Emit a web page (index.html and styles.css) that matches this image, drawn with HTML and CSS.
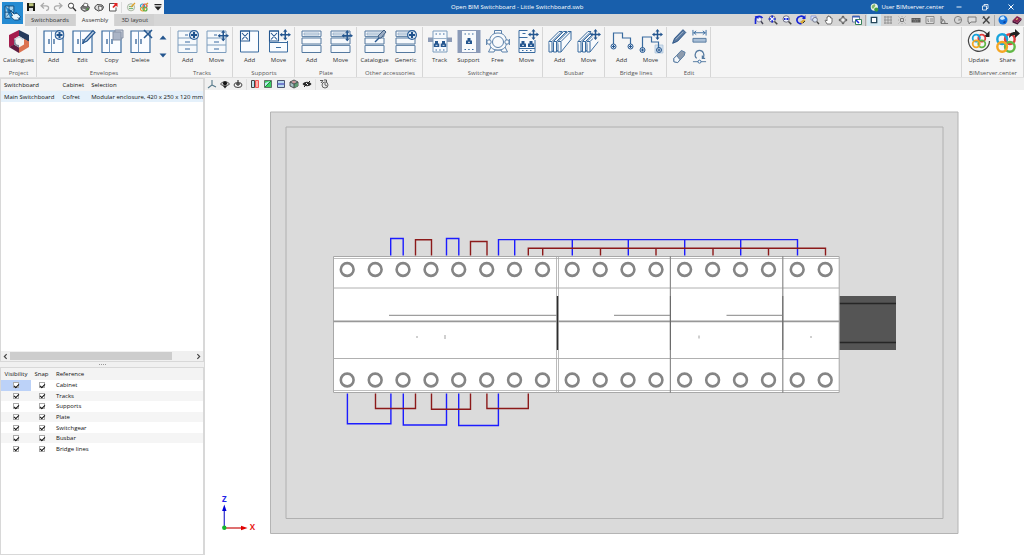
FILE: index.html
```
<!DOCTYPE html>
<html lang="en">
<head>
    <meta charset="UTF-8">
    <meta name="viewport" content="width=device-width, initial-scale=1.0">
    <title>Open BIM Switchboard - Little Switchboard.swb</title>
    <link rel="stylesheet" href="styles.css">
</head>
<body>
    <!-- shared icon parts -->
    <svg class="defs" aria-hidden="true">
        <symbol id="plus" viewBox="0 0 10 10"><circle cx="5" cy="5" r="4.400" fill="#dfe8f2" stroke="#2b5f99" stroke-width="1.200"/><path d="M5 2v6M2 5h6" stroke="#1f528c" stroke-width="2"/></symbol>
        <symbol id="move" viewBox="0 0 12 12"><path d="M6 0l2.200 2.800H6.800v2.400h2.400V3.800L12 6 9.200 8.200V6.800H6.800v2.400h1.400L6 12 3.800 9.200h1.400V6.800H2.800v1.400L0 6l2.800-2.200v1.400h2.400V2.800H3.800z" fill="#24568f"/></symbol>
        <symbol id="cabinet" viewBox="0 0 24 24"><path d="M2 2h19v21.500H2z" fill="#fafcff" stroke="#396b9f" stroke-width="1.200"/><path d="M9.500 2v21.500" stroke="#7398bf"/><path d="M7 10v5M12 10v5" stroke="#24568f" stroke-width="1.200"/></symbol>
        <symbol id="drawers" viewBox="0 0 24 24"><path d="M2 2h19v21.500H2z" fill="#f6f9fc" stroke="#7d9dbd"/><path d="M2 9h19M2 16h19" stroke="#7d9dbd"/><path d="M9 13h5M9 20h5M9 6h3" stroke="#396b9f" stroke-width="1.200"/></symbol>
        <symbol id="plates" viewBox="0 0 24 24"><path d="M2 2h19v5.500H2zM2 9h19v6H2zM2 16.500h19v7H2z" fill="#f6f9fc" stroke="#54799f"/><path d="M4 4h15v2H4z" fill="#dbe5ef" stroke="#8aa5c0" stroke-width=".7"/><path d="M2 8.200h19M2 15.800h19" stroke="#9ab2ca"/></symbol>
        <symbol id="breaker" viewBox="0 0 6 7"><path d="M1.500 0h3v2.500H6V6H0V2.500h1.500z" fill="#24568f"/><path d="M2 4.300h2" stroke="#dfe8f2"/></symbol>
        <symbol id="bars" viewBox="0 0 24 24"><g fill="#f8fafc" stroke="#396b9f" stroke-linejoin="round"><path d="M1 12.500L11 2.500h3v8L4 23H1z"/><path d="M1 12.500h3V23M4 12.500l10-10"/><path d="M5.500 12.500l10-10h3v8L8.500 23h-3z"/><path d="M5.500 12.500h3V23M8.500 12.500l10-10"/><path d="M10 12.500l10-10h3v8L13 23h-3z"/><path d="M10 12.500h3V23M13 12.500l10-10"/></g></symbol>
        <symbol id="rings" viewBox="0 0 20 20"><g fill="none" stroke-width="2.200"><circle cx="6.500" cy="6.500" r="4.400" stroke="#18a4dc"/><circle cx="13.500" cy="6.500" r="4.400" stroke="#e23d3d"/><circle cx="13.500" cy="13.500" r="4.400" stroke="#62b846"/><circle cx="6.500" cy="13.500" r="4.400" stroke="#f5a623"/><path d="M8 2.400a4.400 4.400 0 0 1 2.900 4.100" stroke="#18a4dc"/></g></symbol>
        <symbol id="lens" viewBox="0 0 10 10"><circle cx="4.200" cy="4" r="3.200" fill="#eef3ff" stroke="#667" stroke-width=".9"/><path d="M6.500 6.500L9.300 9.300" stroke="#444" stroke-width="1.500"/></symbol>
    </svg>

    <header class="top">
        <button class="logo" aria-label="Application menu">
            <svg viewBox="0 0 24 24"><path d="M3.500 4h10v7M3.500 4v14h6M3.500 11h6M8 4v6" fill="#a9d4ee" stroke="#0d4474" stroke-width="1"/><path d="M5 16l7-8" stroke="#0d4474" stroke-width=".8"/><path d="M9 9l5 4c2-1 4-1 5 1l2 2-2 4h-5l-4-4 2-1z" fill="#e9f5fc" stroke="#0d4474" stroke-width="1"/><path d="M13 13v-2M16 13v-2M18 17l3 3" stroke="#0d4474"/></svg>
        </button>
        <div class="titlebar">
            <div class="quick">
                <button aria-label="Save"><svg viewBox="0 0 10 10"><path d="M1 1h8v8H1z" fill="#1a1a12"/><path d="M3 1.200h4.500v3H3z" fill="#b9c27b"/><path d="M3 6h4v3H3z" fill="#ddd"/></svg></button>
                <button aria-label="Undo"><svg viewBox="0 0 10 10"><path d="M4 1L1 3.800 4 6.500M1.500 3.800H6c3.500 0 3.500 4.500 0 4.700" fill="none" stroke="#aaa" stroke-width="1.200"/></svg></button>
                <button aria-label="Redo"><svg viewBox="0 0 10 10"><path d="M6 1l3 2.800-3 2.700M8.500 3.800H4c-3.500 0-3.500 4.500 0 4.700" fill="none" stroke="#aaa" stroke-width="1.200"/></svg></button>
                <button aria-label="Find"><svg viewBox="0 0 10 10"><circle cx="4" cy="3.700" r="2.600" fill="#fff" stroke="#444" stroke-width="1"/><path d="M5.800 5.500L9 9" stroke="#333" stroke-width="1.300"/></svg></button>
                <button aria-label="Print"><svg viewBox="0 0 10 10"><path d="M.800 5.500L3 3l5 .500 1.500 2-1 2.500-4 1.500-3.200-2z" fill="#777" stroke="#333" stroke-width=".7"/><path d="M3 4l1.500-3L8 2 7 5z" fill="#fff" stroke="#444" stroke-width=".7"/><path d="M2.500 7l3 1" stroke="#eee"/><circle cx="7.500" cy="7" r="1" fill="#49983d"/></svg></button>
                <button aria-label="Page setup"><svg viewBox="0 0 10 10"><path d="M.800 5L3 2.500l5 .5 1.500 2-1 2.500-4 1.500L1 7z" fill="#ddd" stroke="#444" stroke-width="1"/><path d="M4.500 4l3.500.500V8L5 8.500z" fill="#fff" stroke="#444" stroke-width=".8"/></svg></button>
                <button aria-label="Export"><svg viewBox="0 0 10 10"><path d="M6 1.500H1.500v7.500H8V5.500" fill="#fff" stroke="#555"/><path d="M5.500 1H9.500v4L8 3.700 5.500 6 4.300 5l2.400-2.400z" fill="#e02424"/></svg></button>
                <i class="sep"></i>
                <button aria-label="Edit resources"><svg viewBox="0 0 10 10"><circle cx="5" cy="5.300" r="3.600" fill="#e9eee3" stroke="#9aa996" stroke-width=".8"/><path d="M3 4.500h4M3 6.500h4" stroke="#77b57b"/><path d="M5 5l4-4" stroke="#e1a12c" stroke-width="1.300"/></svg></button>
                <button aria-label="Update resources"><svg viewBox="0 0 10 10"><circle cx="3.500" cy="4" r="2" fill="none" stroke="#2aa2cf" stroke-width="1.200"/><circle cx="6" cy="4" r="2" fill="none" stroke="#d44" stroke-width="1.200"/><circle cx="3.500" cy="7" r="2" fill="none" stroke="#e4a02a" stroke-width="1.200"/><circle cx="6" cy="7" r="2" fill="none" stroke="#5bae43" stroke-width="1.200"/><path d="M6.500 3L9 1" stroke="#d99a2d" stroke-width="1.300"/></svg></button>
                <button aria-label="Customise toolbar"><svg viewBox="0 0 10 10"><path d="M1.500 2h7v1.200h-7zM1.500 4.500h7L5 8.500z" fill="#222"/></svg></button>
            </div>
            <h1 class="title">Open BIM Switchboard - Little Switchboard.swb</h1>
            <a class="user" href="#"><svg viewBox="0 0 10 10"><circle cx="4.800" cy="4.500" r="4" fill="#e8f3e3"/><path d="M2 3l3-2 1 2-2 3-2 0z" fill="#82b66a"/><circle cx="7" cy="7.300" r="2.300" fill="#3f9d40"/></svg>User BIMserver.center</a>
            <div class="window">
                <button aria-label="Minimise"><svg viewBox="0 0 10 10"><path d="M2.500 5h5" stroke="#fff" stroke-width=".9"/></svg></button>
                <button aria-label="Restore"><svg viewBox="0 0 10 10"><path d="M2.500 4h4v4h-4zM4 4V2.500h4v4H6.500" fill="none" stroke="#fff" stroke-width=".8"/></svg></button>
                <button aria-label="Close"><svg viewBox="0 0 10 10"><path d="M2.500 2.500l5 5M7.500 2.500l-5 5" stroke="#fff" stroke-width="1"/></svg></button>
            </div>
        </div>
        <div class="tabbar">
            <nav class="tabs">
                <a href="#">Switchboards</a>
                <a href="#" class="active">Assembly</a>
                <a href="#">3D layout</a>
            </nav>
            <div class="tools">
                <button aria-label="Previous view"><svg viewBox="0 0 10 10"><path d="M6 5l3 4" stroke="#445" stroke-width="1.400"/><circle cx="5" cy="4.500" r="2.500" fill="#eef" stroke="#778" stroke-width=".7"/><path d="M1.500 9V4c0-3 5-3.500 7-1" fill="none" stroke="#1624d8" stroke-width="1.600"/><path d="M.500 1h4v3z" fill="#1624d8"/></svg></button>
                <button aria-label="Zoom all"><svg viewBox="0 0 10 10"><use href="#lens"/><path d="M4.200 .5v7M.700 4h7" stroke="#1624d8" stroke-width="1.700" stroke-dasharray="2.200 2.600"/></svg></button>
                <button aria-label="Zoom in"><svg viewBox="0 0 10 10"><use href="#lens"/><path d="M2 4h1.500M4.500 4h2" stroke="#1624d8" stroke-width="1.800"/></svg></button>
                <button aria-label="Redraw"><svg viewBox="0 0 10 10"><path d="M1 6V4c1-3 6-4 7-1M1 6c1 3 4 3 5 2" fill="none" stroke="#1624d8" stroke-width="1.700"/><path d="M9.500 0v4H6z" fill="#1624d8"/><path d="M4 7l4-3 1.500 2L6 9z" fill="#d8a937"/><path d="M7 8l2-2" stroke="#333"/></svg></button>
                <button aria-label="Zoom window"><svg viewBox="0 0 10 10"><path d="M1 1h5v4H1z" fill="#dce5ff" stroke="#7988c8" stroke-width=".7"/><circle cx="5" cy="4.800" r="2.400" fill="#dce8f6" stroke="#667" stroke-width=".8"/><path d="M6.800 6.600L9 9" stroke="#444" stroke-width="1.400"/></svg></button>
                <button aria-label="Pan"><svg viewBox="0 0 10 10"><path d="M3 9L1 5.500l1-.5 1 1V2h1V1h1.200v.7h1.300V3H8v4L7 9z" fill="#fff" stroke="#555" stroke-width=".8"/></svg></button>
                <button aria-label="Orbit"><svg viewBox="0 0 10 10"><path d="M5 .5l2 2H3zM5 9.500l2-2H3zM.500 5l2-2v4zM9.500 5l-2-2v4z" fill="#555"/><circle cx="5" cy="5" r="2.300" fill="#eee" stroke="#555" stroke-width=".8"/></svg></button>
                <button aria-label="Window layout"><svg viewBox="0 0 10 10"><path d="M.500 1h7v6h-7z" fill="#fff" stroke="#6677a4"/><path d="M.500 1h7v1.500h-7z" fill="#3c62b8"/><path d="M3.500 4.500h6v5h-6z" fill="#fff" stroke="#38835b"/><path d="M4 5l3 3" stroke="#1624d8" stroke-width="1.500"/></svg></button>
                <i class="sep"></i>
                <button class="on" aria-label="Ortho"><svg viewBox="0 0 10 10"><path d="M2.300 2.300h5.400v5.400H2.300z" fill="#fff" stroke="#244659" stroke-width="1.300"/></svg></button>
                <button aria-label="Grid"><svg viewBox="0 0 10 10"><path d="M2 1v8M5 1v8M8 1v8M1 2h8M1 5h8M1 8h8" stroke="#888" stroke-width=".8"/></svg></button>
                <button aria-label="Snap"><svg viewBox="0 0 10 10"><path d="M3.500 3.500h3v3h-3z" fill="none" stroke="#777"/><path d="M1.500 1.500l1 1M8.500 1.500l-1 1M1.500 8.500l1-1M8.500 8.500l-1-1M5 1v1M5 8v1M1 5h1M8 5h1" stroke="#999" stroke-width=".8"/></svg></button>
                <button aria-label="Keyboard input"><svg viewBox="0 0 10 10"><path d="M.500 3h9v4.500h-9z" fill="#555"/><path d="M1.500 4.300h7M2.500 6h5" stroke="#bbb" stroke-width=".7" stroke-dasharray="1 .6"/></svg></button>
                <button aria-label="Drawing templates"><svg viewBox="0 0 10 10"><path d="M1 1.500h8v7H1z" fill="#ddd" stroke="#777" stroke-width=".8"/><path d="M3 3.500v3h1M5 4h3M5 6h3" fill="none" stroke="#777" stroke-width=".8"/></svg></button>
                <button aria-label="Angle"><svg viewBox="0 0 10 10"><path d="M2 1v7.500h7M2 4c3 0 4 2 4 4.500M4 5l-2 3" fill="none" stroke="#666" stroke-width=".9"/></svg></button>
                <button aria-label="Circle"><svg viewBox="0 0 10 10"><circle cx="5" cy="5" r="3.600" fill="none" stroke="#777" stroke-width=".9"/><path d="M5 5h2.500M6 3.500L7.500 5" stroke="#777" stroke-width=".8"/></svg></button>
                <button aria-label="Comment"><svg viewBox="0 0 10 10"><path d="M1 2h8v5H4L2 9V7H1z" fill="#ddd" stroke="#666" stroke-width=".8"/></svg></button>
                <button aria-label="Settings"><svg viewBox="0 0 10 10"><path d="M2 1.500l6.500 7M8.500 1.500L2 8.500" stroke="#444" stroke-width="1.400"/><path d="M1.500 3.500l2-2" stroke="#444"/></svg></button>
                <i class="sep"></i>
                <button aria-label="Web"><svg viewBox="0 0 10 10"><circle cx="5" cy="5" r="4.500" fill="#1674dd"/><path d="M2 4c0-2 2-3 4-2.500L7 4 4 5z" fill="#cce9ff"/><path d="M5 7l2-1 1 1-2 1.500z" fill="#0b3f9a"/></svg></button>
                <button aria-label="Help"><svg viewBox="0 0 10 10"><path d="M.500 5.500L5 1l4.500 2.500L5.500 8z" fill="#8b2450"/><path d="M.500 5.500v2L5.500 9.500l4-4.500V3.500L5.500 8z" fill="#481238"/><path d="M4 4.500l2-1" stroke="#f0c66a" stroke-width="1.200"/></svg></button>
            </div>
        </div>
    </header>

    <div class="ribbon">
        <section class="group project">
            <div class="items">
                <button class="cmd wide"><svg viewBox="0 0 24 24"><path d="M2 6L12 1v6l-5 3v6l-5 2z" fill="#a51d4d"/><path d="M2 18l5-2.500 5 3V24z" fill="#5f1c40"/><path d="M12 1l10 5v7l-5-3-5-3z" fill="#263b5c"/><path d="M22 12.500V18l-10 6v-5.500l5-3V10z" fill="#dc7351"/><path d="M7 10l5-3 5 3-5 3z" fill="#c9d1da"/><path d="M7 10l5 3v5.500l-5-3z" fill="#7d8795"/><circle cx="12" cy="12.500" r="3.600" fill="#f3f3f3"/></svg>Catalogues</button>
            </div>
            <h2>Project</h2>
        </section>
        <section class="group">
            <div class="items">
                <button class="cmd"><svg viewBox="0 0 24 24"><use href="#cabinet"/><use href="#plus" x="12.500" y="1" width="10" height="10"/></svg>Add</button>
                <button class="cmd"><svg viewBox="0 0 24 24"><use href="#cabinet"/><path d="M12 14l2-4 8-8.500 2 2-8 8.500z" fill="#b8cbe0" stroke="#24568f" stroke-width="1.200"/></svg>Edit</button>
                <button class="cmd"><svg viewBox="0 0 24 24"><use href="#cabinet"/><path d="M15 1h8v8h-8z" fill="#c3c9d6" stroke="#8792a6"/><path d="M13 3h8v8h-8z" fill="#aab4c6" stroke="#8792a6"/></svg>Copy</button>
                <button class="cmd"><svg viewBox="0 0 24 24"><use href="#cabinet"/><path d="M15 1l8 8M23 1l-8 8" stroke="#24568f" stroke-width="1.600"/></svg>Delete</button>
                <div class="spin">
                    <button aria-label="Up"><svg viewBox="0 0 8 5"><path d="M.500 4.500h7L4 .5z" fill="#24568f"/></svg></button>
                    <button aria-label="Down"><svg viewBox="0 0 8 5"><path d="M.500.500h7L4 4.500z" fill="#24568f"/></svg></button>
                </div>
            </div>
            <h2>Envelopes</h2>
        </section>
        <section class="group">
            <div class="items">
                <button class="cmd"><svg viewBox="0 0 24 24"><use href="#drawers"/><use href="#plus" x="13" y="1" width="10" height="10"/></svg>Add</button>
                <button class="cmd"><svg viewBox="0 0 24 24"><use href="#drawers"/><use href="#move" x="12.500" y="1" width="11.500" height="11.500"/></svg>Move</button>
            </div>
            <h2>Tracks</h2>
        </section>
        <section class="group">
            <div class="items">
                <button class="cmd"><svg viewBox="0 0 24 24"><path d="M2.500 2h18v21h-18z" fill="#fafcff" stroke="#396b9f"/><path d="M2.500 2h9v10h-9zM4 4l6 6.500M10 4l-6 6.500" fill="none" stroke="#24568f" stroke-width="1.100"/></svg>Add</button>
                <button class="cmd"><svg viewBox="0 0 24 24"><path d="M2.500 2h18v21h-18zM2.500 13.500h18M9 18.500h5" fill="#fafcff" stroke="#396b9f"/><path d="M12 0h12v12H12z" fill="#f5f5f5"/><path d="M2.500 2h9v10h-9zM4 4l6 6.500M10 4l-6 6.500" fill="none" stroke="#24568f" stroke-width="1.100"/><use href="#move" x="12.500" width="11.500" height="11.500"/></svg>Move</button>
            </div>
            <h2>Supports</h2>
        </section>
        <section class="group">
            <div class="items">
                <button class="cmd"><svg viewBox="0 0 24 24"><use href="#plates"/></svg>Add</button>
                <button class="cmd"><svg viewBox="0 0 24 24"><use href="#plates"/><use href="#move" x="12.500" y="1" width="11.500" height="11.500"/></svg>Move</button>
            </div>
            <h2>Plate</h2>
        </section>
        <section class="group accessories">
            <div class="items">
                <button class="cmd"><svg viewBox="0 0 24 24"><use href="#plates"/><path d="M12 13l5-5" stroke="#24568f" stroke-width="1.500"/><path d="M16 9l-1-2 6-6 2 2-5 6z" fill="#9aacc4" stroke="#405e82"/></svg>Catalogue</button>
                <button class="cmd"><svg viewBox="0 0 24 24"><use href="#plates"/><use href="#plus" x="13" y="1" width="10" height="10"/></svg>Generic</button>
            </div>
            <h2>Other accessories</h2>
        </section>
        <section class="group">
            <div class="items">
                <button class="cmd"><svg viewBox="0 0 24 24"><path d="M0 8.500h24v4.500H0z" fill="#8c9bb6"/><path d="M5 2h14v21H5z" fill="#f6f9fc" stroke="#7d9dbd"/><path d="M7.500 5h1.500M11.200 5h1.500M15 5h1.500M7.500 21h1.500M11.200 21h1.500M15 21h1.500" stroke="#396b9f" stroke-width="1.200"/><path d="M5 9.500h14" stroke="#9ab2ca"/><use href="#breaker" x="5.500" y="12" width="6" height="7"/><use href="#breaker" x="12.500" y="12" width="6" height="7"/></svg>Track</button>
                <button class="cmd"><svg viewBox="0 0 24 24"><path d="M.500 1h23v23H.5z" fill="#8b9bb8"/><path d="M5 2h14v21H5z" fill="#f8fafc"/><path d="M7.500 5h1.500M11.200 5h1.500M15 5h1.500M7.500 20.500h1.500M11.200 20.500h1.500M15 20.500h1.500" stroke="#396b9f" stroke-width="1.200"/><use href="#breaker" x="9" y="9" width="6" height="7"/></svg>Support</button>
                <button class="cmd"><svg viewBox="0 0 24 24"><g fill="#f8fafc" stroke="#5c82ab"><path d="M5 18l-2.500 5H8l1-2h6l1 2h5.500L19 18"/><path d="M8.500 5V1.500h7V5"/><path d="M12 4c6 0 8.500 4 8.500 9s-2.500 8-8.500 8-8.500-3-8.500-8S6 4 12 4z"/><circle cx="3" cy="13" r="2.200"/><circle cx="21" cy="13" r="2.200"/><circle cx="12" cy="13" r="5.500"/></g><path d="M.600 10v6M23.400 10v6" stroke="#5c82ab"/></svg>Free</button>
                <button class="cmd"><svg viewBox="0 0 24 24"><path d="M4 1.500h16v22H4zM4 8.500h16M4 19.500h16" fill="#f8fafc" stroke="#396b9f"/><path d="M7.500 4.500h3M7 21.500h1.500M11 21.500h1.500M15 21.500h1.500" stroke="#396b9f" stroke-width="1.200"/><use href="#breaker" x="5" y="12" width="6" height="7"/><use href="#breaker" x="13" y="12" width="6" height="7"/><path d="M12.500 0H24v11H12.500z" fill="#f5f5f5"/><use href="#move" x="13" width="11" height="11"/></svg>Move</button>
            </div>
            <h2>Switchgear</h2>
        </section>
        <section class="group">
            <div class="items">
                <button class="cmd"><svg viewBox="0 0 24 24"><use href="#bars"/></svg>Add</button>
                <button class="cmd"><svg viewBox="0 0 24 24"><use href="#bars"/><path d="M15 0h9v14l-8-4-2-6z" fill="#f5f5f5"/><use href="#move" x="13" width="11" height="11"/></svg>Move</button>
            </div>
            <h2>Busbar</h2>
        </section>
        <section class="group">
            <div class="items">
                <button class="cmd"><svg viewBox="0 0 24 24"><path d="M3.500 15V4h9v5h8v6" fill="none" stroke="#396b9f" stroke-width="1.200"/><g fill="#dfe8f2" stroke="#24568f"><circle cx="3.500" cy="17.500" r="2.500"/><circle cx="20.500" cy="17.500" r="2.500"/></g><path d="M2 17.500h3M19 17.500h3M3.500 16v3M20.500 16v3" stroke="#24568f"/></svg>Add</button>
                <button class="cmd"><svg viewBox="0 0 24 24"><path d="M16 16h8v8h-8z" fill="#d3e1ef" stroke="#a7c0d9" stroke-width=".7"/><path d="M3.500 19V8h9v5h7v6" fill="none" stroke="#396b9f" stroke-width="1.200"/><g fill="#dfe8f2" stroke="#24568f"><circle cx="3.500" cy="21" r="2.500"/><circle cx="20" cy="21" r="2.500"/></g><path d="M2 21h3M18.500 21h3M3.500 19.500v3M20 19.500v3" stroke="#24568f"/><use href="#move" x="13" width="11" height="11"/></svg>Move</button>
            </div>
            <h2>Bridge lines</h2>
        </section>
        <section class="group edit">
            <div class="items">
                <button aria-label="Edit"><svg viewBox="0 0 16 16"><path d="M.700 15.300l2-5.300 9-9.300 3 3L6 13z" fill="#5c7aa0" stroke="#234f83"/><path d="M4 11l8-8" stroke="#9db1c8"/></svg></button>
                <button aria-label="Measure"><svg viewBox="0 0 16 16"><path d="M1 1v6M15 1v6M1.500 4h13M4.500 2L2 4l2.500 2M11.500 2L14 4l-2.500 2" fill="none" stroke="#396b9f" stroke-width="1"/><path d="M1 10h14v4H1z" fill="#a9bfd7" stroke="#54799f"/></svg></button>
                <button aria-label="Erase"><svg viewBox="0 0 16 16"><path d="M2 10l8-8.500 4 2L13 7l-7 7.500-4-1z" fill="#8d9bad" stroke="#54799f"/><path d="M2 10l3-3 3.500 4.500L6 14.500l-4-1z" fill="#f5f8fb" stroke="#54799f"/></svg></button>
                <button aria-label="Rotate"><svg viewBox="0 0 16 16"><path d="M5 10C1.500 7 4 1.500 8 1.500s6.500 5.500 3 8.500M11 7v3h3" fill="none" stroke="#54799f" stroke-width="1.200"/><path d="M1 13.500h14" stroke="#54799f"/><circle cx="8" cy="13.500" r="1.600" fill="#fff" stroke="#396b9f"/></svg></button>
            </div>
            <h2>Edit</h2>
        </section>
        <section class="group server">
            <div class="items">
                <button class="cmd"><svg viewBox="0 0 24 24"><path d="M20 5A10.500 10.500 0 1 0 22.500 12" fill="none" stroke="#444" stroke-width="1.200"/><path d="M22.500 2v6h-6z" fill="#222"/><use href="#rings" x="4" y="4" width="16" height="16"/></svg>Update</button>
                <button class="cmd"><svg viewBox="0 0 24 24"><use href="#rings" x="-1" y="3" width="22" height="22"/><path d="M13 9c0-4 2-6 6-6V0l5 4.500L19 9V6c-3 0-4 1-6 3z" fill="#222"/></svg>Share</button>
            </div>
            <h2>BIMserver.center</h2>
        </section>
    </div>

    <main class="work">
        <aside class="side">
            <div class="boards">
                <table>
                    <thead><tr><th>Switchboard</th><th>Cabinet</th><th>Selection</th></tr></thead>
                    <tbody><tr><td>Main Switchboard</td><td>Cofret</td><td>Modular enclosure, 420 x 250 x 120 mm</td></tr></tbody>
                </table>
                <div class="hscroll">
                    <button aria-label="Scroll left"><svg viewBox="0 0 6 6"><path d="M4 1L2 3l2 2" fill="none" stroke="#444"/></svg></button>
                    <div class="track"><div class="thumb"></div></div>
                    <button aria-label="Scroll right"><svg viewBox="0 0 6 6"><path d="M2 1l2 2-2 2" fill="none" stroke="#444"/></svg></button>
                </div>
            </div>
            <div class="splitter"><i></i><i></i><i></i><i></i></div>
            <div class="layers">
                <table>
                    <thead><tr><th>Visibility</th><th>Snap</th><th>Reference</th></tr></thead>
                    <tbody>
                        <tr><td class="current"><input type="checkbox" aria-label="Cabinet visible" checked></td><td><input type="checkbox" aria-label="Cabinet snap" checked></td><td>Cabinet</td></tr>
                        <tr><td><input type="checkbox" aria-label="Tracks visible" checked></td><td><input type="checkbox" aria-label="Tracks snap" checked></td><td>Tracks</td></tr>
                        <tr><td><input type="checkbox" aria-label="Supports visible" checked></td><td><input type="checkbox" aria-label="Supports snap" checked></td><td>Supports</td></tr>
                        <tr><td><input type="checkbox" aria-label="Plate visible" checked></td><td><input type="checkbox" aria-label="Plate snap" checked></td><td>Plate</td></tr>
                        <tr><td><input type="checkbox" aria-label="Switchgear visible" checked></td><td><input type="checkbox" aria-label="Switchgear snap" checked></td><td>Switchgear</td></tr>
                        <tr><td><input type="checkbox" aria-label="Busbar visible" checked></td><td><input type="checkbox" aria-label="Busbar snap" checked></td><td>Busbar</td></tr>
                        <tr><td><input type="checkbox" aria-label="Bridge lines visible" checked></td><td><input type="checkbox" aria-label="Bridge lines snap" checked></td><td>Bridge lines</td></tr>
                    </tbody>
                </table>
            </div>
        </aside>

        <section class="view">
            <div class="viewbar">
                <button aria-label="Axes"><svg viewBox="0 0 10 10"><path d="M5 1v5L1 9M5 6l4 2" fill="none" stroke="#56798a" stroke-width="1.100"/></svg></button>
                <button aria-label="Orbit view"><svg viewBox="0 0 10 10"><path d="M.500 5C3 2 7 2 9.500 5 7 7.500 3 7.500.500 5z" fill="#ccc" stroke="#333" stroke-width=".9"/><path d="M5 9.500L3 7h4z" fill="#222"/><circle cx="5" cy="4.200" r="2" fill="#111"/></svg></button>
                <button aria-label="Turn view"><svg viewBox="0 0 10 10"><ellipse cx="5" cy="6" rx="4" ry="2.500" fill="none" stroke="#444"/><path d="M5 1v6M3 5h4" stroke="#444" stroke-width="1.300"/></svg></button>
                <i class="sep"></i>
                <button aria-label="Section X"><svg viewBox="0 0 10 10"><path d="M1.500 1.500h3v7h-3z" fill="#bde3ef" stroke="#444"/><path d="M5.500 1.500h3v7h-3z" fill="#ffb0aa" stroke="#e55"/></svg></button>
                <button aria-label="Section Y"><svg viewBox="0 0 10 10"><path d="M1.500 1.500h7v7h-7z" fill="#39cf62" stroke="#5f6f66"/><path d="M2 8V4l5-2z" fill="#bfe9f2"/><path d="M2 8l6-6" stroke="#168c38"/></svg></button>
                <button aria-label="Section Z"><svg viewBox="0 0 10 10"><path d="M1.500 1.500h7v7h-7z" fill="#bad9ed" stroke="#4c5570"/><path d="M1.500 5h7" stroke="#5a62c4" stroke-width="1.500"/></svg></button>
                <button aria-label="Section box"><svg viewBox="0 0 10 10"><path d="M5 1l4 2v4L5 9 1 7V3z" fill="#a5bfc4" stroke="#444" stroke-width=".9"/><path d="M5 5l4-2v4L5 9z" fill="#5f9c73"/><path d="M2.500 3L5 2l2 1-2 1z" fill="#d88"/><path d="M1 3l4 2v4M5 5l4-2" fill="none" stroke="#444" stroke-width=".9"/></svg></button>
                <button aria-label="Hide elements"><svg viewBox="0 0 10 10"><path d="M.500 5C3 2 7 2 9.500 5 7 8 3 8 .500 5z" fill="#222"/><circle cx="5" cy="5" r="1.200" fill="#fff"/><path d="M2 8l6-6" stroke="#222"/></svg></button>
                <i class="sep"></i>
                <button aria-label="Rendering"><svg viewBox="0 0 10 10"><circle cx="6" cy="6" r="3" fill="#e8e8e8" stroke="#666"/><path d="M1 1.500h3L2 4M5 1h2.500v2" fill="none" stroke="#555"/><path d="M6 4v2l2 1" fill="none" stroke="#666"/></svg></button>
            </div>
            <svg class="scene" viewBox="205 90 819 465" preserveAspectRatio="xMinYMin meet" role="img" aria-label="Front view of the cabinet">
                <!-- cabinet -->
                <path d="M270.500 112h687.500v421.500H270.500z" fill="#dadada" stroke="#b4b4b4"/>
                <path d="M286 127h657v391.500H286z" fill="#dbdbdb" stroke="#b0b0b0"/>
                <!-- rail -->
                <path d="M839 296h57v54h-57z" fill="#555"/>
                <path d="M839 303.500h57M839 342.500h57" stroke="#262626" stroke-width="1.300"/>
                <!-- modules -->
                <path d="M333.500 256.500h505.700v136H333.500z" fill="#fff" stroke="#a8a8a8"/>
                <path d="M333.500 258.500h505.700M333.500 390.500h505.700" stroke="#b0b0b0" stroke-width=".8"/>
                <path d="M333.500 288h505.700M333.500 358.500h505.700" stroke="#b0b0b0"/>
                <path d="M333.500 321.300h505.700" stroke="#989898" stroke-width="1.800"/>
                <path d="M556.500 256v137M558.500 256v137" stroke="#aaa" stroke-width=".8"/>
                <path d="M670.400 256v137M782.800 256v137" stroke="#8c8c8c" stroke-width="1.200"/>
                <path d="M557.500 296v54" stroke="#2d2d2d" stroke-width="1.400"/>
                <path d="M670.400 296v54M782.800 296v54" stroke="#666"/>
                <path d="M389 315.300h168M614 315.300h56M726.500 315.300h56" stroke="#868686"/>
                <path d="M417 336v2M445 335v4M699 335.500v3M811 336v2" stroke="#888" stroke-width=".8"/>
                <!-- terminals -->
                <g fill="#fff" stroke="#858585" stroke-width="2.600">
                    <circle cx="347.200" cy="269.500" r="6.400"/><circle cx="375.200" cy="269.500" r="6.400"/><circle cx="403" cy="269.500" r="6.400"/><circle cx="431" cy="269.500" r="6.400"/><circle cx="458.700" cy="269.500" r="6.400"/><circle cx="486.700" cy="269.500" r="6.400"/><circle cx="514.500" cy="269.500" r="6.400"/><circle cx="542.500" cy="269.500" r="6.400"/>
                    <circle cx="572.200" cy="269.500" r="6.400"/><circle cx="600.200" cy="269.500" r="6.400"/><circle cx="628" cy="269.500" r="6.400"/><circle cx="656" cy="269.500" r="6.400"/><circle cx="684.600" cy="269.500" r="6.400"/><circle cx="712.600" cy="269.500" r="6.400"/><circle cx="740.500" cy="269.500" r="6.400"/><circle cx="768.500" cy="269.500" r="6.400"/><circle cx="797.200" cy="269.500" r="6.400"/><circle cx="825.200" cy="269.500" r="6.400"/>
                    <circle cx="347.200" cy="380" r="6.400"/><circle cx="375.200" cy="380" r="6.400"/><circle cx="403" cy="380" r="6.400"/><circle cx="431" cy="380" r="6.400"/><circle cx="458.700" cy="380" r="6.400"/><circle cx="486.700" cy="380" r="6.400"/><circle cx="514.500" cy="380" r="6.400"/><circle cx="542.500" cy="380" r="6.400"/>
                    <circle cx="572.200" cy="380" r="6.400"/><circle cx="600.200" cy="380" r="6.400"/><circle cx="628" cy="380" r="6.400"/><circle cx="656" cy="380" r="6.400"/><circle cx="684.600" cy="380" r="6.400"/><circle cx="712.600" cy="380" r="6.400"/><circle cx="740.500" cy="380" r="6.400"/><circle cx="768.500" cy="380" r="6.400"/><circle cx="797.200" cy="380" r="6.400"/><circle cx="825.200" cy="380" r="6.400"/>
                </g>
                <!-- bridge lines -->
                <g fill="none" stroke="#1c1cff" stroke-width="1.400">
                    <path d="M390.700 255.500v-17h12.500v17M446.500 255.500v-17h12.300v17M498.500 255.500v-15.900h299v15.900M514.700 239.600v15.900M572.300 239.600v15.900M628.300 239.600v15.900M684.700 239.600v15.900M740.700 239.600v15.900"/>
                    <path d="M347.400 393.500V423.800H390.900V393.500M403.300 393.500V425H446.500V393.500M458.700 393.500V425.500H498.400V393.500"/>
                </g>
                <g fill="none" stroke="#8c1a1a" stroke-width="1.400">
                    <path d="M415.500 255.500v-15.800h16v15.800M470.500 255.500v-14h16.500v14M528.300 255.500v-7.200h297.200v7.200M542.700 248.300v7.200M600.500 248.300v7.200M656 248.300v7.200M713 248.300v7.200M768.500 248.300v7.200"/>
                    <path d="M375.500 393.500v15h40v-15M431.500 393.500v15.700h39v-15.700M486.900 393.500v15h41.400v-15"/>
                </g>
                <!-- axes -->
                <path d="M224.300 527V509" stroke="#3a3ad0" stroke-width="1.300"/>
                <path d="M224.300 504.500l2.200 6.500h-4.400z" fill="#0000d8"/>
                <path d="M225 528h17" stroke="#c22" stroke-width="1.300"/>
                <path d="M247.500 528l-6.500-2.200v4.400z" fill="#e00000"/>
                <circle cx="224.300" cy="527.700" r="2.200" fill="#12b52c"/>
                <text class="axis z" x="224.300" y="501.500">Z</text>
                <text class="axis x" x="252.500" y="530">X</text>
            </svg>
        </section>
    </main>
</body>
</html>
```
FILE: styles.css
```
* { box-sizing: border-box; }
html, body { height: 100%; }
body {
    margin: 0;
    display: flex;
    flex-direction: column;
    background: #f0f0f0;
    color: #111;
    font: 6px/8px "Open Sans", "Noto Sans", sans-serif;
    overflow: hidden;
}
button {
    margin: 0;
    padding: 0;
    border: 0;
    background: none;
    color: inherit;
    font: inherit;
}
a { color: inherit; text-decoration: none; }
h1, h2 { margin: 0; font: inherit; }
svg { display: block; }
.defs { position: absolute; width: 0; height: 0; }

/* title bar and tabs */
.top {
    display: grid;
    grid-template: 14px 12px / 24px 1fr;
    background: #d6d6d6;
}
.logo {
    grid-row: 1 / 3;
    padding: 2px 1px 2px 2px;
    background: #f5f5f5;
}
.logo svg { width: 21px; height: 22px; background: #258bd2; }
.titlebar {
    display: flex;
    align-items: stretch;
    background: #185fac;
    color: #fff;
}
.quick {
    display: flex;
    align-items: center;
    justify-content: space-between;
    width: 140px;
    padding: 0 1px 0 2px;
    background: #f5f5f5;
}
.quick svg, .tools svg, .viewbar svg { width: 10px; height: 10px; }
.title { flex: 1; text-align: center; line-height: 14px; }
.user { display: flex; align-items: center; gap: 2px; margin-right: 5px; }
.user svg { width: 9px; height: 9px; }
.window { display: flex; align-items: center; gap: 16px; padding: 0 8px 0 5px; }
.window svg { width: 10px; height: 10px; }
.tabbar { display: flex; justify-content: space-between; }
.tabs { display: flex; gap: 1px; border-left: 1px solid #f5f5f5; color: #333; }
.tabs a { padding: 0 6px; line-height: 12px; background: #d1d1d1; }
.tabs .active { background: #f5f5f5; }
.tools { display: flex; align-items: center; }
.tools button {
    display: grid;
    place-items: center;
    width: 14px;
    height: 12px;
}
.tools .on { background: #d5e9f2; }
.sep { width: 1px; height: 11px; background: #dcdcdc; }
.tools .sep { margin: 0 1px; background: #aaa; }

/* ribbon */
.ribbon {
    display: flex;
    height: 52px;
    padding-top: 1px;
    background: #f5f5f5;
    border-bottom: 1px solid #e0e0e0;
}
.group {
    display: flex;
    flex-direction: column;
    justify-content: space-between;
    padding: 2px 1px 0 2px;
    border-right: 1px solid #d6d6d6;
}
.group h2 { color: #555; text-align: center; white-space: nowrap; }
.items { display: flex; }
.cmd {
    display: flex;
    flex-direction: column;
    align-items: center;
    gap: 3px;
    width: 29px;
    color: #333;
}
.cmd svg { width: 24px; height: 24px; overflow: visible; }
.cmd.wide { width: 33px; }
.accessories .cmd { width: 31px; }
.spin {
    display: flex;
    flex-direction: column;
    justify-content: center;
    gap: 13px;
    width: 14px;
    padding-left: 4px;
}
.spin svg { width: 8px; height: 5px; }
.edit .items { display: grid; grid-template-columns: 20px 20px; row-gap: 5px; }
.edit button { display: grid; place-items: center; }
.edit svg { width: 15px; height: 15px; }
.server { margin-left: auto; border-left: 1px solid #d6d6d6; }

/* work area */
.work { flex: 1; display: flex; min-height: 0; }
.side {
    display: flex;
    flex-direction: column;
    width: 205px;
    border-right: 1px solid #d8d8d8;
}
table { width: 100%; border-collapse: collapse; white-space: nowrap; }
th, td { padding: 0; font-weight: 400; text-align: left; }
th { background: #f3f3f3; }
.boards {
    flex: 1;
    display: flex;
    flex-direction: column;
    justify-content: space-between;
    background: #fff;
    border: 1px solid #d8d8d8;
    overflow: hidden;
}
.boards th { height: 12px; }
.boards td { height: 11px; background: #e5f1fb; }
.boards th, .boards td { padding-left: 3px; }
.boards th:first-child { width: 59px; }
.boards th:nth-child(2) { width: 29px; }
.hscroll { display: flex; align-items: center; height: 10px; background: #f0f0f0; }
.hscroll button { width: 9px; display: grid; place-items: center; }
.hscroll svg { width: 7px; height: 7px; }
.track { flex: 1; }
.thumb { width: 88%; height: 8px; background: #cdcdcd; }
.splitter { display: flex; justify-content: center; align-items: center; gap: 1px; height: 5px; }
.splitter i { width: 1px; height: 1px; background: #999; }
.layers { height: 188px; background: #fff; border: 1px solid #d8d8d8; }
.layers table { height: 86px; }
.layers th { height: 12px; text-align: center; }
.layers th:last-child, .layers td:last-child { padding-left: 4px; text-align: left; }
.layers th:first-child { width: 30px; }
.layers th:nth-child(2) { width: 21px; }
.layers td { text-align: center; }
.layers tbody tr:nth-child(even) { background: #f5f5f5; }
.layers .current { background: #bcd2f8; }
.layers input {
    appearance: none;
    display: grid;
    place-items: center;
    width: 6px;
    height: 6px;
    margin: 0 auto;
    border: 1px solid #aaa;
    background: #fff;
}
.layers input:checked::after {
    content: "";
    width: 4px;
    height: 2px;
    border: solid #111;
    border-width: 0 0 1px 1px;
    transform: rotate(-45deg);
}

/* 3D view */
.view { flex: 1; display: flex; flex-direction: column; background: #fff; }
.viewbar {
    display: flex;
    align-items: center;
    gap: 3px;
    height: 12px;
    padding: 0 2px;
    background: #f0f0f0;
}
.viewbar .sep { background: #e0e0e0; }
.scene { width: 100%; flex: 1; min-height: 0; }
.axis { font: bold 8px "Open Sans", sans-serif; text-anchor: middle; }
.z { fill: #2222e8; }
.x { fill: #e81818; }
```
